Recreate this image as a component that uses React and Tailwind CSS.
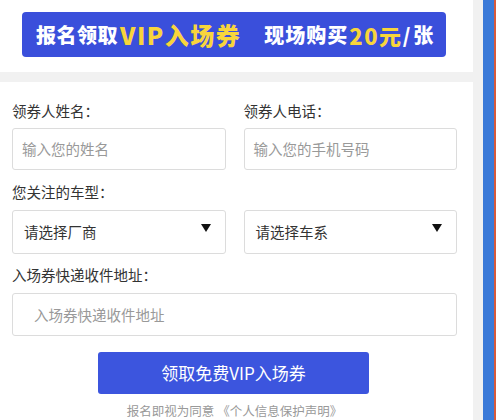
const FONT = { fontFamily: '"Noto Sans CJK SC", "Noto Sans", sans-serif' }

function Field({ label, children }) {
  return (
    <div className="flex flex-col">
      <div className="h-[20px] text-[14.5px] leading-[20px] text-[#333]">{label}</div>
      {children}
    </div>
  )
}

function Select({ text }) {
  return (
    <div className="flex h-[44px] items-center justify-between rounded-[3px] border border-[#dcdcdc] pl-[11px] pr-[14px]">
      <span className="text-[14.5px] text-[#333]">{text}</span>
      <svg width="10" height="8" viewBox="0 0 10 8" className="-mt-[8px]">
        <path d="M0 0h10L5 8z" fill="#111" />
      </svg>
    </div>
  )
}

export default function App() {
  return (
    <div className="flex h-[420px] w-[496px] overflow-hidden bg-white" style={FONT}>
      <div className="flex w-[473px] flex-col">
        <div className="flex h-[72px] items-start bg-white pl-[22px] pt-[12px]">
          <div className="flex h-[45px] w-[424px] items-center rounded-[4px] bg-[#3a4fdb] pl-[14px] font-black text-white">
            <span className="text-[20px] leading-none tracking-[0.5px]">报名领取</span>
            <span className="ml-[2px] text-[24px] leading-none tracking-[1.5px] text-[#f8d53c]">VIP入场券</span>
            <span className="ml-[23px] text-[20px] leading-none tracking-[1px]">现场购买</span>
            <span className="ml-[1px] text-[22px] leading-none tracking-[1.5px] text-[#f8d53c]">20元</span>
            <span className="text-[20px] leading-none tracking-[3px]">/张</span>
          </div>
        </div>
        <div className="h-[10px] bg-[#f1f1f1]" />
        <div className="flex flex-1 flex-col bg-white pl-[12px] pr-[16px] pt-[19px]">
          <div className="grid grid-cols-2 gap-x-[18px]">
            <Field label="领券人姓名：">
              <div className="mt-[7px] flex h-[42px] items-center rounded-[3px] border border-[#dcdcdc] pl-[9px] text-[14.5px] text-[#999]">
                输入您的姓名
              </div>
            </Field>
            <Field label="领券人电话：">
              <div className="mt-[7px] flex h-[42px] items-center rounded-[3px] border border-[#dcdcdc] pl-[9px] text-[14.5px] text-[#999]">
                输入您的手机号码
              </div>
            </Field>
          </div>
          <div className="mt-[12px] h-[20px] text-[14.5px] leading-[20px] text-[#333]">您关注的车型：</div>
          <div className="mt-[8px] grid grid-cols-2 gap-x-[18px]">
            <Select text="请选择厂商" />
            <Select text="请选择车系" />
          </div>
          <div className="mt-[11px] h-[20px] text-[14.5px] leading-[20px] text-[#333]">入场券快递收件地址：</div>
          <div className="mt-[8px] flex h-[43px] items-center rounded-[3px] border border-[#dcdcdc] pl-[21px] text-[14.5px] text-[#999]">
            入场券快递收件地址
          </div>
          <div className="mt-[16px] flex justify-center pr-[2px]">
            <button className="h-[42px] w-[271px] rounded-[3px] bg-[#3c55de] text-[17px] text-white">
              领取免费VIP入场券
            </button>
          </div>
          <div className="mt-[8px] text-center text-[12.5px] leading-[18px] text-[#999]">
            报名即视为同意 《个人信息保护声明》
          </div>
        </div>
      </div>
      <div className="w-[10px] bg-[#f1f1f1]" />
      <div className="w-[11px] bg-[#3b7ad8]" />
      <div className="w-[2px] bg-[#d85a3a]" />
    </div>
  )
}
